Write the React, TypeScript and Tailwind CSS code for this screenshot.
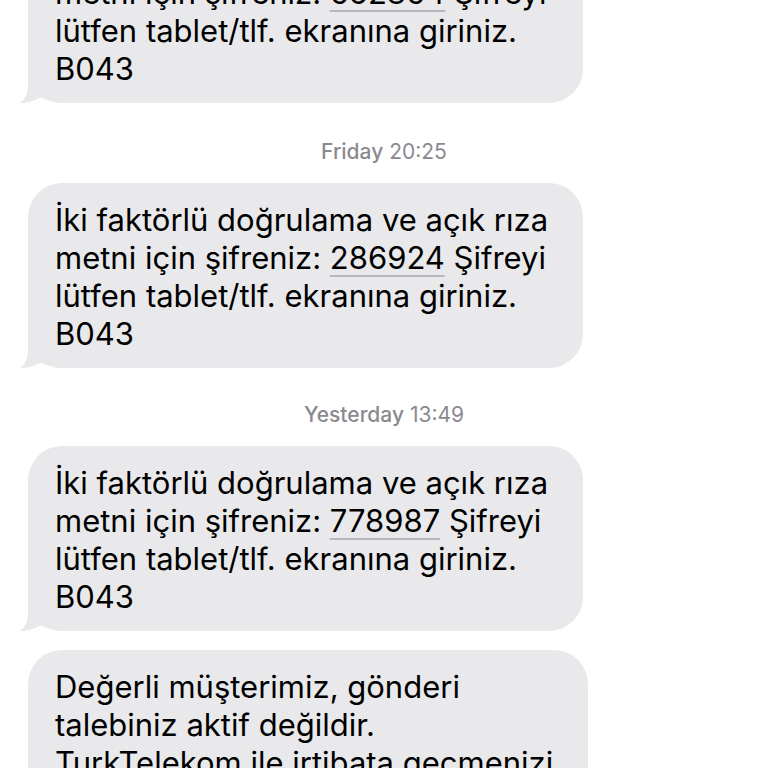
import React from 'react';

const FONT = { fontFamily: 'Inter, "Noto Sans", sans-serif' };

function Code({ value }: { value: string }) {
  return (
    <span className="underline decoration-[#b8b8bc] decoration-[1.5px] underline-offset-[6px]">{value}</span>
  );
}

function Tail() {
  return (
    <svg className="absolute left-[-10px] bottom-0" width="40" height="34" viewBox="0 0 40 34">
      <path
        d="M10 0 L10 16 C10 25 7 30 2 34 C10 34 17 32 22 28.5 C27 31 33 32 40 32 L40 0 Z"
        fill="#e9e9eb"
      />
    </svg>
  );
}

function Bubble({ lines, width, tail = true, className = '' }: { lines: React.ReactNode[]; width: string; tail?: boolean; className?: string }) {
  return (
    <div className={`relative ml-[28px] ${width} ${className}`}>
      {tail && <Tail />}
      <div className="relative rounded-[34px] bg-[#e9e9eb] pl-[27px] pr-[20px] pt-[18px] pb-[15px] text-[31px] leading-[38px] text-black">
        {lines.map((l, i) => (
          <div key={i} className="whitespace-nowrap">{l}</div>
        ))}
      </div>
    </div>
  );
}

function Stamp({ day, time, className = '' }: { day: string; time: string; className?: string }) {
  return (
    <div className={`h-[26px] text-center text-[21px] leading-[26px] text-[#8a8a8e] ${className}`}>
      <span className="font-medium">{day}</span> <span>{time}</span>
    </div>
  );
}

function otp(code: string) {
  return [
    'İki faktörlü doğrulama ve açık rıza',
    <>metni için şifreniz: <Code value={code} /> Şifreyi</>,
    'lütfen tablet/tlf. ekranına giriniz.',
    'B043',
  ];
}

export default function App() {
  return (
    <div className="h-screen w-full overflow-hidden bg-white" style={FONT}>
      <Bubble lines={otp('652864')} width="w-[555px]" className="-mt-[82px]" />
      <Stamp day="Friday" time="20:25" className="mt-[36px] mb-[18px]" />
      <Bubble lines={otp('286924')} width="w-[555px]" />
      <Stamp day="Yesterday" time="13:49" className="mt-[34px] mb-[18px]" />
      <Bubble lines={otp('778987')} width="w-[555px]" />
      <Bubble
        lines={[
          'Değerli müşterimiz, gönderi',
          'talebiniz aktif değildir.',
          'TurkTelekom ile irtibata geçmenizi',
          'rica ederiz.',
        ]}
        width="w-[560px]"
        tail={false}
        className="mt-[19px]"
      />
    </div>
  );
}
